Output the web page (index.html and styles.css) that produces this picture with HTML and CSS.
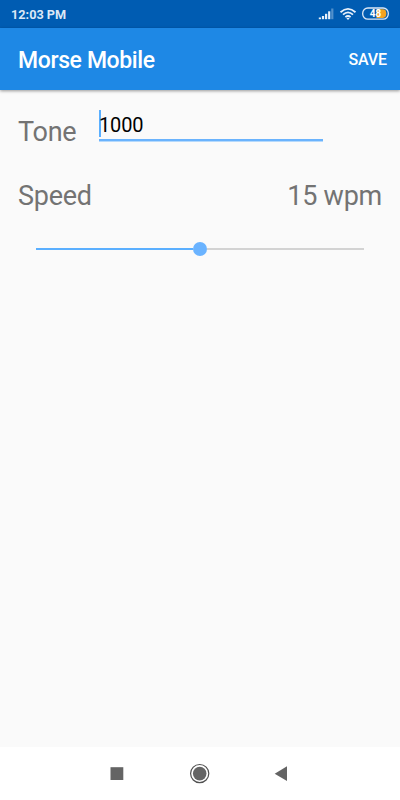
FILE: index.html
```html
<!DOCTYPE html>
<html lang="en">
<head>
  <meta charset="UTF-8" />
  <title>Morse Mobile</title>
  <link rel="stylesheet" href="styles.css">
</head>

<body>
  <div class="status-bar">
    <span class="clock">12:03 PM</span>
    <svg class="status-icons" width="72" height="16" viewBox="0 0 72 16">
      <!-- signal -->
      <g fill="#e8f0fa">
        <rect x="0.8" y="11.5" width="2.2" height="1.7" />
        <rect x="3.9" y="10" width="2.2" height="3.2" />
        <rect x="7" y="7.8" width="2.2" height="5.4" />
        <rect x="10.1" y="5.3" width="2.2" height="7.9" />
        <rect x="13.2" y="2.5" width="2.2" height="10.7" opacity="0.35" />
      </g>
      <!-- wifi -->
      <g fill="none" stroke="#e8f0fa" stroke-width="1.8">
        <path d="M22.5 6.2 Q30 -0.4 37.5 6.2" />
        <path d="M25 8.7 Q30 4.1 35 8.7" />
        <path d="M27.4 11.1 Q30 8.9 32.6 11.1" />
      </g>
      <path d="M28.4 12.3 Q30 11.2 31.6 12.3 L30 14 Z" fill="#e8f0fa" />
      <!-- battery -->
      <path d="M58.5 3.3 H65 Q68.3 3.3 68.3 7.6 T65 11.9 H58.5 Z" fill="#f5a31f" />
      <rect x="44.7" y="2" width="25.6" height="11.2" rx="5.2" fill="none" stroke="#dce8f6" stroke-width="1.3" />
      <text class="battery-level" x="57.6" y="11.2" text-anchor="middle">48</text>
    </svg>
  </div>

  <div class="app-bar">
    <h1>Morse Mobile</h1>
    <button class="save">SAVE</button>
  </div>

  <div class="content">
    <div class="row tone">
      <label for="tone">Tone</label>
      <div class="field">
        <span class="cursor"></span>
        <input type="text" id="tone" value="1000" />
      </div>
    </div>

    <div class="row speed">
      <span>Speed</span>
      <span>15 wpm</span>
    </div>

    <div class="slider">
      <div class="track filled"></div>
      <div class="thumb"></div>
      <div class="track"></div>
    </div>
  </div>

  <div class="nav-bar">
    <svg width="400" height="53" viewBox="0 0 400 53" fill="#646464">
      <rect x="110.5" y="20.2" width="12.8" height="12.8" />
      <circle cx="199.7" cy="26.6" r="6.8" />
      <circle cx="199.7" cy="26.6" r="9.1" fill="none" stroke="#505050" stroke-width="1.2" />
      <path d="M287 19.3 V34 L274.7 26.7 Z" />
    </svg>
  </div>
</body>
</html>
```

FILE: styles.css
```css
html, body {
  height: 100%;
  margin: 0;
}

body {
  display: flex;
  flex-direction: column;
  font-family: Roboto, sans-serif;
  background: #fafafa;
  color: #737373;
  overflow: hidden;
}

.status-bar {
  display: flex;
  justify-content: space-between;
  align-items: center;
  height: 28px;
  flex: none;
  box-sizing: border-box;
  padding: 0 10px 0 11px;
  background: #005cb2;
}

.clock {
  font-size: 12.7px;
  font-weight: 700;
  color: #dce8f6;
  padding-top: 1px;
}

.battery-level {
  font-size: 10px;
  font-weight: 700;
  fill: #fff;
}

.app-bar {
  display: flex;
  justify-content: space-between;
  align-items: center;
  height: 62px;
  flex: none;
  box-sizing: border-box;
  padding: 2px 13px 0 18px;
  background: #1e88e5;
  box-shadow: 0 1px 3px rgba(0, 0, 0, 0.4);
  color: #fff;
}

h1 {
  margin: 0;
  font-size: 23px;
  font-weight: 500;
  letter-spacing: -0.38px;
}

.save {
  border: 0;
  padding: 0 0 1px;
  background: none;
  color: #fff;
  font: 500 16px Roboto, sans-serif;
  letter-spacing: -0.1px;
}

.content {
  flex: 1;
  padding: 18px 18px 0;
}

.row {
  display: flex;
  font-size: 27px;
  line-height: 32px;
  letter-spacing: -0.25px;
}

.tone label {
  width: 81px;
  padding-top: 8px;
}

.field {
  display: flex;
  width: 224px;
  height: 33px;
  box-sizing: border-box;
  padding-top: 2px;
  border-bottom: 2px solid #6ab3fd;
  box-shadow: 0 1px #b5d9fc;
}

.cursor {
  width: 2px;
  height: 27px;
  margin-right: -2px;
  background: #5aafff;
}

.field input {
  width: 100%;
  height: 29px;
  border: 0;
  padding: 1px 0 0;
  box-sizing: border-box;
  outline: 0;
  background: none;
  color: #000;
  font: 20px Roboto, sans-serif;
  letter-spacing: -0.15px;
}

.speed {
  justify-content: space-between;
  padding-top: 32px;
}

.slider {
  display: flex;
  align-items: center;
  height: 14px;
  padding: 30px 18px 0;
}

.track {
  flex: 1;
  height: 2px;
  background: #d3d3d3;
}

.track.filled {
  background: #5aafff;
}

.thumb {
  width: 14px;
  height: 14px;
  border-radius: 50%;
  background: #6ab3ff;
}

.nav-bar {
  height: 53px;
  flex: none;
  background: #fff;
}

.nav-bar svg {
  display: block;
}
```
